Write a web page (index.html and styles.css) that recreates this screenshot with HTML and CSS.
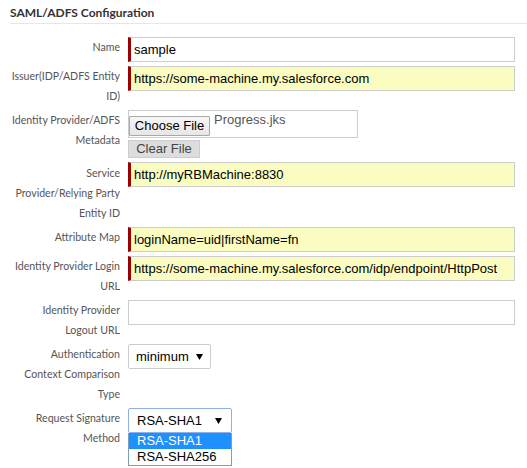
FILE: index.html
```html
<!DOCTYPE html>
<html>
<head>
<meta charset="utf-8">
<link rel="stylesheet" href="styles.css">
</head>
<body>
<div class="panel">
  <h2 class="title">SAML/ADFS Configuration</h2>
  <div class="form">
    <div class="label">Name</div>
    <div class="field"><div class="input req">sample</div></div>

    <div class="label">Issuer(IDP/ADFS Entity ID)</div>
    <div class="field"><div class="input req filled">https://some-machine.my.salesforce.com</div></div>

    <div class="label">Identity Provider/ADFS Metadata</div>
    <div class="field">
      <div class="filebox req">
        <span class="btn-choose">Choose File</span>
        <span class="filename">Progress.jks</span>
      </div>
      <div class="btn-clear">Clear File</div>
    </div>

    <div class="label label-pad">Service Provider/Relying Party Entity ID</div>
    <div class="field"><div class="input req filled">http://myRBMachine:8830</div></div>

    <div class="label">Attribute Map</div>
    <div class="field"><div class="input req filled">loginName=uid|firstName=fn</div></div>

    <div class="label">Identity Provider Login URL</div>
    <div class="field"><div class="input req filled">https://some-machine.my.salesforce.com/idp/endpoint/HttpPost</div></div>

    <div class="label">Identity Provider Logout URL</div>
    <div class="field"><div class="input"></div></div>

    <div class="label">Authentication<br>Context Comparison Type</div>
    <div class="field">
      <div class="select sel-auth">
        <span>minimum</span>
        <svg class="arrow" width="7" height="6" viewBox="0 0 7 6"><path d="M0 0H7L3.5 6Z" fill="#000"/></svg>
      </div>
    </div>

    <div class="label">Request Signature Method</div>
    <div class="field">
      <div class="select-wrap">
        <div class="select sel-sig">
          <span>RSA-SHA1</span>
          <svg class="arrow" width="7" height="6" viewBox="0 0 7 6"><path d="M0 0H7L3.5 6Z" fill="#000"/></svg>
        </div>
        <ul class="dropdown">
          <li class="opt active">RSA-SHA1</li>
          <li class="opt">RSA-SHA256</li>
        </ul>
      </div>
    </div>
  </div>
</div>
</body>
</html>
```

FILE: styles.css
```css
html, body {
  margin: 0;
  padding: 0;
  background: #fff;
}
body {
  min-height: 468px;
}
.panel {
  padding-left: 10px;
  padding-bottom: 40px;
  width: 517px;
}
.title {
  margin: 0;
  padding: 5px 0 2px 0;
  font-family: Lato, "Liberation Sans", sans-serif;
  font-weight: bold;
  font-size: 12px;
  line-height: 16px;
  color: #333;
  border-bottom: 1px solid #e6e6e6;
}
.form {
  margin-top: 13px;
  display: grid;
  grid-template-columns: 110px 387px;
  column-gap: 8px;
  row-gap: 4px;
  align-items: start;
}
.label {
  font-family: Lato, "Liberation Sans", sans-serif;
  font-size: 10.6px;
  line-height: 20px;
  color: #555;
  text-align: right;
}
.label-pad {
  padding-top: 1px;
}
.field {
  display: flex;
  flex-direction: column;
  align-items: flex-start;
}
.input {
  box-sizing: border-box;
  width: 100%;
  height: 25px;
  border: 1px solid #ccc;
  background: #fff;
  font-family: "Liberation Sans", Arial, sans-serif;
  font-size: 13px;
  line-height: 23px;
  color: #000;
  padding: 0 3px;
  white-space: nowrap;
  overflow: hidden;
}
.req {
  border-left: 3px solid #9b0000;
}
.filled {
  background: #fafcc0;
}
.filebox {
  box-sizing: border-box;
  width: 230px;
  height: 28px;
  border: 1px solid #ccc;
  display: flex;
  align-items: flex-start;
  font-family: "Liberation Sans", Arial, sans-serif;
  font-size: 13px;
}
.btn-choose {
  box-sizing: border-box;
  margin-top: 5px;
  height: 20px;
  width: 81px;
  border: 1px solid #a9a9a9;
  border-radius: 1px;
  background: linear-gradient(#f6f6f6, #e6e6e6);
  color: #000;
  line-height: 18px;
  text-align: center;
}
.filename {
  margin-left: 4px;
  line-height: 18px;
  color: #555;
}
.btn-clear {
  box-sizing: border-box;
  margin-top: 2px;
  width: 72px;
  height: 18px;
  background: #ddd;
  border: 1px solid #ccc;
  font-family: "Liberation Sans", Arial, sans-serif;
  font-size: 13px;
  line-height: 16px;
  color: #444;
  text-align: center;
}
.select {
  box-sizing: border-box;
  height: 25px;
  border: 1px solid #ccc;
  border-radius: 2px;
  background: #fff;
  display: flex;
  align-items: center;
  justify-content: space-between;
  font-family: "Liberation Sans", Arial, sans-serif;
  font-size: 13px;
  color: #000;
}
.sel-auth {
  width: 83px;
  padding: 0 7px 0 7px;
}
.sel-sig {
  width: 104px;
  padding: 0 9px 0 8px;
  border-color: #8fb0e8;
}
.select-wrap {
  position: relative;
}
.dropdown {
  position: absolute;
  left: 0;
  top: 25px;
  box-sizing: border-box;
  width: 104px;
  margin: 0;
  padding: 0;
  list-style: none;
  border: 1px solid #7f9db9;
  border-top: none;
  background: #fff;
  font-family: "Liberation Sans", Arial, sans-serif;
  font-size: 13px;
}
.opt {
  height: 16px;
  line-height: 16px;
  padding-left: 8px;
  color: #000;
}
.opt.active {
  background: #1e90ff;
  color: #fff;
}
```
